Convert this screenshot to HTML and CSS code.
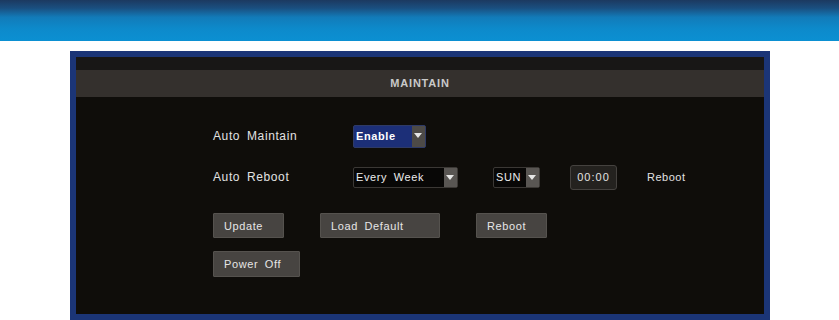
FILE: index.html
```html
<!DOCTYPE html>
<html lang="en">
<head>
  <meta charset="UTF-8" />
  <title>Maintain</title>
  <link rel="stylesheet" href="styles.css">
</head>
<body>

<div class="topbar"></div>

<div class="panel">
  <div class="panel-strip"></div>
  <div class="panel-title">MAINTAIN</div>

  <div class="panel-body">
    <div class="row row-first">
      <span class="label">Auto Maintain</span>
      <div class="select select-blue w-enable">
        <span class="select-value bold">Enable</span>
        <span class="select-arrow"></span>
      </div>
    </div>

    <div class="row row-second">
      <span class="label">Auto Reboot</span>
      <div class="select select-dark w-week">
        <span class="select-value">Every Week</span>
        <span class="select-arrow"></span>
      </div>
      <div class="select select-dark w-day">
        <span class="select-value">SUN</span>
        <span class="select-arrow"></span>
      </div>
      <div class="time-box">00:00</div>
      <span class="text-plain">Reboot</span>
    </div>

    <div class="row row-buttons">
      <button class="btn w-update">Update</button>
      <button class="btn w-default">Load Default</button>
      <button class="btn w-reboot">Reboot</button>
    </div>

    <div class="row row-power">
      <button class="btn w-power">Power Off</button>
    </div>
  </div>
</div>

</body>
</html>
```

FILE: styles.css
```css
body {
  margin: 0;
  background: #fff;
  font-family: 'Liberation Sans', Arial, sans-serif;
  font-size: 11px;
  color: #e2e2e2;
  overflow: hidden;
}

.topbar {
  height: 41px;
  background: linear-gradient(to bottom, #1c3960 0%, #1a4f80 20%, #127bb9 42%, #0d8acb 70%, #0b90d2 100%);
}

.panel {
  margin: 10px 0 0 70px;
  width: 688px;
  height: 257px;
  border: 6px solid #1b3577;
  background: #0f0d0a;
}

.panel-strip {
  height: 13px;
  background: #181716;
}

.panel-title {
  height: 27px;
  line-height: 27px;
  background: #34302d;
  text-align: center;
  font-weight: bold;
  letter-spacing: 0.8px;
  color: #c9c9c9;
}

.panel-body {
  padding-left: 137px;
}

.row {
  display: flex;
  align-items: center;
}

.row-first { margin-top: 28px; height: 22px; }
.row-second { margin-top: 19px; height: 22px; }
.row-buttons { margin-top: 25px; gap: 36px; }
.row-power { margin-top: 13px; }

.label {
  width: 140px;
  font-size: 12px;
  letter-spacing: 0.6px;
  word-spacing: 3px;
}

.select {
  display: flex;
  height: 21px;
  box-sizing: border-box;
  border: 1px solid #3b3835;
  border-radius: 2px;
}

.select-value {
  flex: 1;
  padding-left: 2px;
  line-height: 19px;
  letter-spacing: 0.6px;
  word-spacing: 3px;
  color: #ececec;
}

.bold {
  font-weight: bold;
  color: #fff;
}

.select-arrow {
  width: 13px;
  background: #4d4a47;
  position: relative;
}

.select-arrow::after {
  content: "";
  position: absolute;
  left: 2px;
  top: 7px;
  border-left: 4px solid transparent;
  border-right: 4px solid transparent;
  border-top: 5px solid #e6e6e6;
}

.select-blue {
  height: 23px;
  background: #1c2f78;
  border-color: #2e3a66;
}

.select-blue .select-value { line-height: 21px; }

.select-dark {
  background: #080706;
}

.select-dark .select-arrow { background: #595653; }

.w-enable { width: 73px; }
.w-week { width: 105px; margin-right: 35px; }
.w-day { width: 47px; margin-right: 30px; }

.time-box {
  width: 47px;
  height: 25px;
  box-sizing: border-box;
  border: 1px solid #45423f;
  border-radius: 3px;
  background: #24221f;
  text-align: center;
  line-height: 23px;
  letter-spacing: 1px;
  margin-right: 30px;
}

.text-plain {
  letter-spacing: 0.5px;
}

.btn {
  height: 25px;
  box-sizing: border-box;
  background: #474441;
  border: 1px solid #55524e;
  border-radius: 1px;
  color: #e6e6e6;
  font-family: inherit;
  font-size: 11px;
  letter-spacing: 0.6px;
  word-spacing: 3px;
  text-align: left;
  padding: 0 0 0 10px;
}

.w-update { width: 71px; }
.w-default { width: 120px; }
.w-reboot { width: 71px; }
.w-power { width: 87px; height: 26px; }
```
